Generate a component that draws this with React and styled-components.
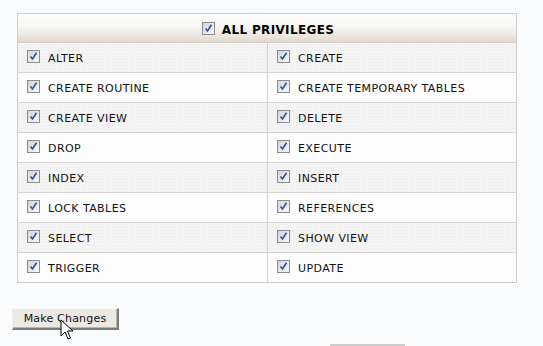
import styled, { createGlobalStyle } from 'styled-components'

const GlobalStyle = createGlobalStyle`
  html, body {
    margin: 0;
    padding: 0;
    background: #fafbfd;
  }
  body {
    font-family: "DejaVu Sans", Verdana, sans-serif;
    font-size: 11px;
    color: #111;
  }
`

const Page = styled.div`
  width: 543px;
  height: 346px;
  overflow: hidden;
  padding: 13px 0 0 12px;
  box-sizing: border-box;
  display: flex;
  flex-direction: column;
  align-items: flex-start;
`

const Table = styled.div`
  width: 500px;
  margin-left: 5px;
  border: 1px solid #cfcfcf;
  box-sizing: border-box;
  background: #fdfdfd;
`

const Header = styled.div`
  height: 29px;
  box-sizing: border-box;
  padding: 4px 0 0 2px;
  display: flex;
  align-items: center;
  justify-content: center;
  gap: 7px;
  background: linear-gradient(to bottom, #fcfcfc 0%, #f8f7f5 45%, #ebe5dd 80%, #e2d9cf 100%);
  border-bottom: 1px solid #d6d0c8;
  font-weight: bold;
  font-size: 12px;
  letter-spacing: 0.35px;
  color: #000;
`

const Grid = styled.div`
  display: grid;
  grid-template-columns: 249px 249px;
`

const Cell = styled.div`
  height: ${(p) => (p.last ? '29px' : '30px')};
  box-sizing: border-box;
  padding: 2px 0 0 9px;
  display: flex;
  align-items: center;
  gap: 8px;
  letter-spacing: 0.42px;
  border-bottom: ${(p) => (p.last ? 'none' : '1px solid #d4d4d4')};
  border-left: ${(p) => (p.right ? '1px solid #d4d4d4' : 'none')};
  background-color: ${(p) => (p.shaded ? '#f4f4f4' : '#fdfdfd')};
  background-image: ${(p) =>
    p.shaded
      ? 'radial-gradient(circle, #e9e9e9 0.6px, transparent 0.8px)'
      : 'none'};
  background-size: 3px 3px;
  color: #111;
`

const Box = styled.span`
  width: 11px;
  height: 11px;
  border: 1px solid #8a8c90;
  background: linear-gradient(135deg, #d4d4d4 0%, #ebebeb 60%, #f8f8f8 100%);
  display: inline-flex;
  align-items: center;
  justify-content: center;
  flex: none;
  position: relative;
  top: -2px;
`

const ButtonRow = styled.div`
  margin-top: 25px;
  position: relative;
`

const Button = styled.button`
  font-family: "DejaVu Sans", Verdana, sans-serif;
  font-size: 11px;
  letter-spacing: 0.2px;
  color: #111;
  height: 22px;
  width: 107px;
  padding: 0;
  background: #ece9e3;
  border-style: solid;
  border-width: 1px 2px 2px 1px;
  border-color: #f8f8f8 #7c7c7c #7c7c7c #f0f0f0;
  box-shadow: inset -1px -1px 0 #b8b5ae;
`

const Cursor = styled.svg`
  position: absolute;
  left: 48px;
  top: 11px;
`

const Footer = styled.div`
  margin-top: 14px;
  margin-left: 318px;
  width: 73px;
  height: 10px;
  border: 1px solid #cccccc;
  background: #fff;
`

const Check = () => (
  <Box>
    <svg width="9" height="9" viewBox="0 0 9 9">
      <path d="M1.5 4.5 L3.5 7 L7.5 0.8" fill="none" stroke="#2a4fa6" strokeWidth="1.6" />
    </svg>
  </Box>
)

const privileges = [
  ['ALTER', 'CREATE'],
  ['CREATE ROUTINE', 'CREATE TEMPORARY TABLES'],
  ['CREATE VIEW', 'DELETE'],
  ['DROP', 'EXECUTE'],
  ['INDEX', 'INSERT'],
  ['LOCK TABLES', 'REFERENCES'],
  ['SELECT', 'SHOW VIEW'],
  ['TRIGGER', 'UPDATE'],
]

const App = () => {
  return (
    <>
      <GlobalStyle />
      <Page>
        <Table>
          <Header>
            <Check />
            ALL PRIVILEGES
          </Header>
          <Grid>
            {privileges.map((pair, i) =>
              pair.map((name, j) => (
                <Cell
                  key={name}
                  right={j === 1}
                  shaded={i % 2 === 0}
                  last={i === privileges.length - 1}
                >
                  <Check />
                  {name}
                </Cell>
              ))
            )}
          </Grid>
        </Table>
        <ButtonRow>
          <Button>Make Changes</Button>
          <Cursor width="14" height="22" viewBox="0 0 14 22">
            <path
              d="M1 1 L1 17 L5 13 L8 20 L10.5 19 L7.5 12 L13 12 Z"
              fill="#fff"
              stroke="#000"
              strokeWidth="1"
              strokeLinejoin="miter"
            />
          </Cursor>
        </ButtonRow>
        <Footer />
      </Page>
    </>
  )
}

export default App
